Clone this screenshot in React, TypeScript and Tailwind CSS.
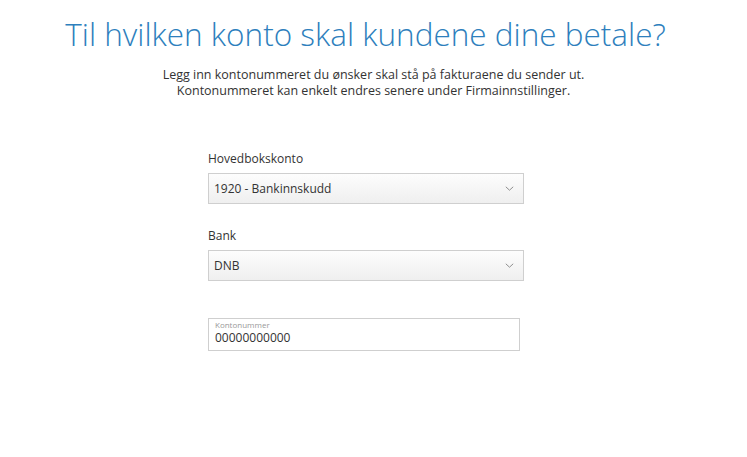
import React from "react";

function Chevron() {
  return (
    <svg width="9" height="5" viewBox="0 0 9 5" fill="none" className="shrink-0">
      <path d="M0.8 0.8l3.7 3.4 3.7-3.4" stroke="#8f8f8f" strokeWidth="1" />
    </svg>
  );
}

function SelectField({ label, value, labelTop }: { label: string; value: string; labelTop: string }) {
  return (
    <div className={labelTop}>
      <div className="text-[12px] leading-[16px] text-[#333] mb-[6px]">{label}</div>
      <div className="h-[31px] w-[316px] border border-[#cfcfcf] bg-gradient-to-b from-[#fdfdfd] to-[#efefef] flex items-center justify-between pl-[5px] pr-[9px]">
        <span className="text-[12px] text-[#333]">{value}</span>
        <Chevron />
      </div>
    </div>
  );
}

export default function App() {
  return (
    <div className="w-[747px] h-[457px] bg-white font-['Open_Sans',sans-serif] flex flex-col items-center">
      <h1 className="mt-[12px] mr-[16px] text-[31.5px] leading-[44px] font-light text-[#2e7fbd]">
        Til hvilken konto skal kundene dine betale?
      </h1>
      <p className="mt-[11px] text-[12.5px] leading-[16px] text-[#333] text-center">
        Legg inn kontonummeret du ønsker skal stå på fakturaene du sender ut.
        <br />
        Kontonummeret kan enkelt endres senere under Firmainnstillinger.
      </p>
      <div className="w-[316px] mt-[52px] mr-[15px]">
        <SelectField label="Hovedbokskonto" value="1920 - Bankinnskudd" labelTop="" />
        <SelectField label="Bank" value="DNB" labelTop="mt-[24px]" />
        <div className="mt-[37px] w-[312px] h-[33px] border border-[#cfcfcf] px-[6px] pt-[1px]">
          <div className="text-[8px] leading-[9px] text-[#999]">Kontonummer</div>
          <div className="text-[12px] leading-[18px] text-[#333]">00000000000</div>
        </div>
      </div>
    </div>
  );
}
